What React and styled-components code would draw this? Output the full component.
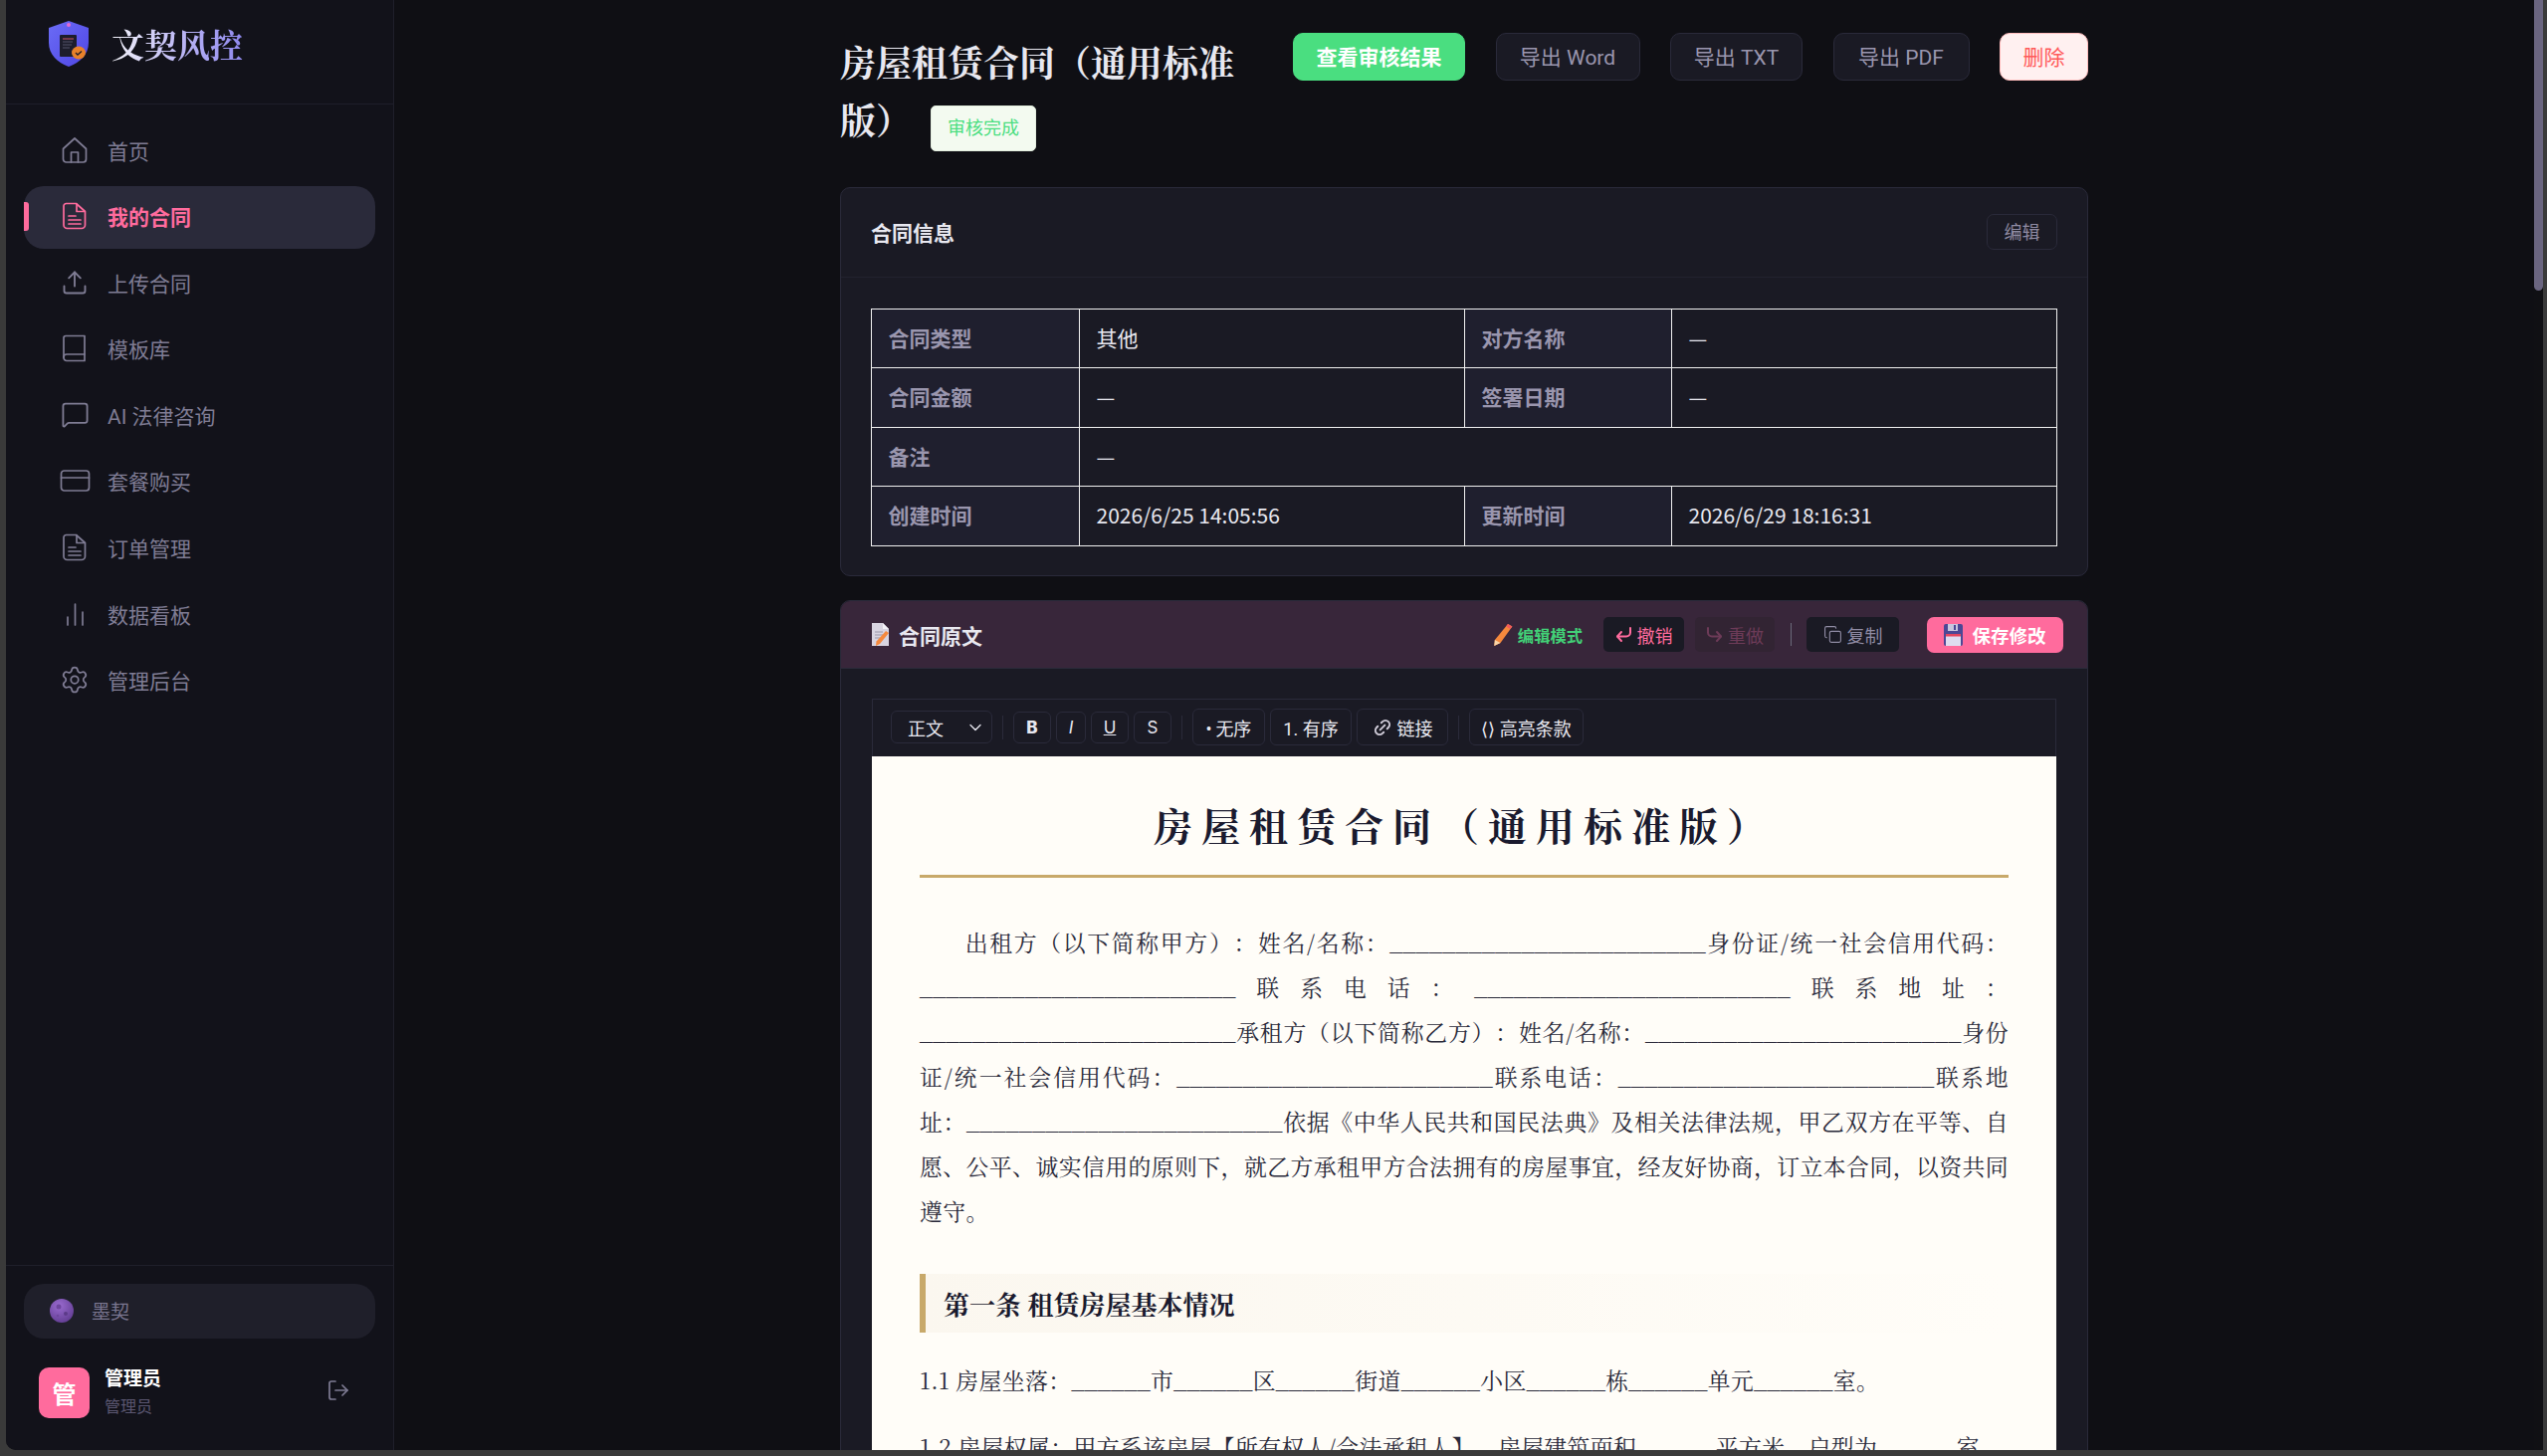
import React from "react";
import styled, { createGlobalStyle } from "styled-components";
import { Settings, Upload, Link2, LogOut, ChevronDown, MessageSquare, Copy } from "lucide-react";

const UI = `Roboto, "Noto Sans CJK SC", sans-serif`;
const SERIF = `"Noto Serif CJK SC", "Liberation Serif", "Noto Sans CJK SC", serif`;

const Global = createGlobalStyle`
  * { box-sizing: border-box; }
  html, body { margin: 0; height: 100%; overflow: hidden; background: #3a3a3a; }
  body { font-family: ${UI}; text-spacing-trim: space-all; }
  #root { height: 100%; }
`;

const Frame = styled.div`
  height: 100vh;
  padding: 0 4px 6px 6px;
  background: #3a3a3a;
`;
const Shell = styled.div`
  display: flex;
  height: 100%;
  background: #0f0f14;
  border-bottom-left-radius: 10px;
  overflow: hidden;
`;
const Sidebar = styled.aside`
  flex: none;
  width: 390px;
  display: flex;
  flex-direction: column;
  background: #12121a;
  border-right: 1px solid #1f1f2a;
`;
const Brand = styled.div`
  flex: none;
  height: 105px;
  display: flex;
  align-items: flex-start;
  gap: 23px;
  padding: 21px 0 0 43px;
  border-bottom: 1px solid #1f1f2a;
`;
const BrandName = styled.div`
  font-family: ${SERIF};
  font-size: 33px;
  line-height: 36px;
  margin-top: 5px;
  font-weight: 700;
  background: linear-gradient(90deg, #f4f4fa 0%, #b9b4f4 55%, #8f88ee 100%);
  -webkit-background-clip: text;
  background-clip: text;
  color: transparent;
`;
const Nav = styled.nav`
  flex: 1;
  display: flex;
  flex-direction: column;
  gap: 3.6px;
  padding: 15px 18px 0;
`;
const NavItem = styled.a`
  position: relative;
  display: flex;
  align-items: center;
  gap: 17px;
  height: 63px;
  padding: 0 0 2px 35px;
  border-radius: 20px;
  font-size: 21px;
  font-weight: ${(p) => (p.$active ? 600 : 400)};
  color: ${(p) => (p.$active ? "#ff6b9d" : "#7f7c94")};
  background: ${(p) => (p.$active ? "#2a2a3a" : "transparent")};
`;
const ActiveMark = styled.span`
  position: absolute;
  left: 0;
  top: 16px;
  width: 5px;
  height: 29px;
  background: #ff6b9d;
  border-radius: 0 3px 3px 0;
`;
const NavIcon = styled.span`
  flex: none;
  width: 32px;
  height: 32px;
  display: flex;
  align-items: center;
  justify-content: center;
`;
const Footer = styled.div`
  flex: none;
  height: 186px;
  padding: 18px 18px 0;
  border-top: 1px solid #1f1f2a;
`;
const ThemeBox = styled.div`
  display: flex;
  align-items: center;
  gap: 18px;
  height: 55px;
  padding: 0 0 2px 26px;
  border-radius: 20px;
  background: #1f1f2a;
  font-size: 19px;
  color: #7a7690;
`;
const UserRow = styled.div`
  display: flex;
  align-items: center;
  margin-top: 28px;
  padding-left: 15px;
`;
const Avatar = styled.div`
  flex: none;
  width: 51px;
  height: 51px;
  display: flex;
  align-items: center;
  justify-content: center;
  border-radius: 10px;
  background: #ff6b9d;
  color: #fff;
  font-size: 24px;
  font-weight: 700;
`;
const UserText = styled.div`
  flex: 1;
  margin-left: 15px;
`;
const UserName = styled.div`
  font-size: 19px;
  line-height: 26px;
  font-weight: 700;
  color: #fff;
`;
const UserRole = styled.div`
  font-size: 16px;
  line-height: 24px;
  margin-top: 3px;
  color: #5a5670;
`;
const LogoutBtn = styled.span`
  display: flex;
  margin-right: 25px;
  margin-top: -6px;
  color: #7f7c94;
`;

const Main = styled.main`
  flex: 1;
  min-width: 0;
  overflow: hidden;
`;
const Content = styled.div`
  width: 1254px;
  margin: 0 auto;
  padding-top: 33px;
`;
const TopRow = styled.div`
  display: flex;
  align-items: flex-start;
  gap: 30px;
`;
const PageTitle = styled.h1`
  flex: 1;
  min-width: 0;
  margin: 0;
  font-family: ${SERIF};
  font-size: 36px;
  line-height: 58px;
  font-weight: 700;
  color: #e8e8f0;
`;
const StatusTag = styled.span`
  display: inline-block;
  margin: -12px 0 -12px 19px;
  padding: 0 16px;
  height: 46px;
  line-height: 44px;
  font-family: ${UI};
  font-size: 18px;
  font-weight: 400;
  color: #4ade80;
  background: #f3faf0;
  border: 1px solid #e4efe0;
  border-radius: 5px;
`;
const Actions = styled.div`
  flex: none;
  display: flex;
  gap: 30.5px;
`;
const ActionBtn = styled.button`
  width: ${(p) => p.$w}px;
  height: 48px;
  padding: 0 0 2px;
  font-family: ${UI};
  font-size: 21px;
  border-radius: 10px;
  ${(p) =>
    p.$kind === "primary"
      ? "background:#4ade80;border:1px solid #4ade80;color:#fff;font-weight:700;"
      : p.$kind === "danger"
      ? "background:#fff0f0;border:1px solid #ffbcbc;color:#ff5a5a;"
      : "background:#1a1a24;border:1px solid #2a2a3a;color:#9a96ae;"}
`;
const Card = styled.section`
  margin-top: ${(p) => p.$top}px;
  background: #1a1a24;
  border: 1px solid #2a2a3a;
  border-radius: 10px;
  overflow: hidden;
`;
const CardHead = styled.div`
  height: 90px;
  display: flex;
  align-items: center;
  justify-content: space-between;
  padding: 0 30px 2px;
  border-bottom: 1px solid #22222e;
`;
const CardTitle = styled.div`
  font-size: 21px;
  font-weight: 700;
  color: #e8e8f0;
`;
const EditBtn = styled.button`
  width: 71px;
  height: 36px;
  padding: 0 0 2px;
  font-family: ${UI};
  font-size: 18px;
  color: #8f8ba3;
  background: transparent;
  border: 1px solid #2a2a3a;
  border-radius: 7px;
`;
const CardBody = styled.div`
  padding: 31px 30px 29px;
`;
const InfoTable = styled.table`
  width: 1192px;
  border-collapse: collapse;
  table-layout: fixed;
  font-family: "Noto Sans CJK SC", sans-serif;
  font-size: 21px;
  & tr:nth-child(odd) { height: 59px; }
  & tr:nth-child(even) { height: 60px; }
  & th, & td {
    border: 1.5px solid #f0f0f0;
    padding: 0 16.5px 3px;
    text-align: left;
  }
  & th { background: #1f1f2e; color: #9a96ae; font-weight: 700; }
  & td { color: #e8e8f0; font-weight: 400; }
`;
const DocHead = styled.div`
  height: 68px;
  display: flex;
  align-items: center;
  padding: 0 24px 0 30px;
  background: #38263a;
  border-bottom: 1px solid #2a2a3a;
`;
const DocTitle = styled.div`
  flex: 1;
  display: flex;
  align-items: center;
  gap: 9px;
  font-size: 21px;
  font-weight: 700;
  color: #e8e8f0;
`;
const ModeLabel = styled.span`
  display: flex;
  align-items: center;
  gap: 5px;
  margin-right: 21px;
  font-size: 16.3px;
  font-weight: 700;
  color: #42d077;
`;
const HistoryBtn = styled.button`
  display: flex;
  align-items: center;
  justify-content: center;
  gap: 5px;
  width: ${(p) => p.$w}px;
  height: 35px;
  padding: 0;
  margin-right: ${(p) => p.$mr}px;
  font-family: ${UI};
  font-size: 18px;
  border: 0;
  border-radius: 5px;
  color: ${(p) => (p.$off ? "#6d3b58" : p.$muted ? "#8f8ba3" : "#ff6b9d")};
  background: ${(p) => (p.$off ? "#322433" : "#1a1a24")};
`;
const HeadSep = styled.span`
  width: 1px;
  height: 23px;
  margin-right: 15px;
  background: #6a6a7a;
`;
const SaveBtn = styled.button`
  display: flex;
  align-items: center;
  justify-content: center;
  gap: 9px;
  width: 137px;
  height: 36px;
  padding: 0;
  font-family: ${UI};
  font-size: 18.5px;
  font-weight: 700;
  color: #fff;
  background: #ff6b9d;
  border: 0;
  border-radius: 7px;
`;
const DocBody = styled.div`
  padding: 30px 31px 0;
`;
const Toolbar = styled.div`
  height: 58px;
  display: flex;
  align-items: center;
  gap: 5px;
  padding: 0 0 2px 18px;
  border: 1px solid #2a2a3a;
  border-bottom: 0;
  background: #1a1a24;
`;
const StyleSelect = styled.div`
  width: 102px;
  height: 33px;
  display: flex;
  align-items: center;
  justify-content: space-between;
  padding: 0 6px 0 16px;
  font-size: 18px;
  color: #e8e8f0;
  background: #1a1a24;
  border: 1px solid #2a2a3a;
  border-radius: 6px;
`;
const ToolSep = styled.span`
  width: 1px;
  height: 24px;
  margin: 0 5px;
  background: #2a2a3a;
`;
const FmtBtn = styled.button`
  width: ${(p) => p.$w || 38}px;
  height: 32px;
  padding: 0;
  font-family: "Inter", ${UI};
  font-size: 17px;
  font-weight: ${(p) => (p.$b ? 800 : 400)};
  font-style: ${(p) => (p.$i ? "italic" : "normal")};
  text-decoration: ${(p) => (p.$u ? "underline" : "none")};
  color: #e8e8f0;
  background: #1a1a24;
  border: 1px solid #2a2a3a;
  border-radius: 6px;
`;
const TextBtn = styled.button`
  display: flex;
  align-items: center;
  justify-content: center;
  gap: 5px;
  width: ${(p) => p.$w}px;
  height: 37px;
  padding: 0;
  font-family: ${UI};
  font-size: 18px;
  color: #e8e8f0;
  background: #1a1a24;
  border: 1px solid #2a2a3a;
  border-radius: 6px;
`;
const SlantedLink = styled(Link2)`
  transform: rotate(-45deg);
  color: #cfcbd8;
`;
const Paper = styled.article`
  padding: 40px 48px 0;
  background: #fffdf8;
  font-family: ${SERIF};
  color: #2a2a3a;
`;
const PaperTitle = styled.h2`
  margin: 0 0 42px;
  padding-bottom: 23px;
  border-bottom: 3px solid #c8a96a;
  font-size: 39px;
  line-height: 56px;
  letter-spacing: 9px;
  font-weight: 700;
  text-align: center;
  color: #1a1a2e;
`;
const Para = styled.p`
  margin: 0 0 ${(p) => p.$mb ?? 22}px;
  font-size: 22.85px;
  line-height: 45px;
  letter-spacing: 0.38px;
  text-align: justify;
  text-indent: ${(p) => (p.$indent ? "2em" : 0)};
`;
const Section = styled.h3`
  margin: 41px 0 25px;
  height: 59px;
  padding-left: 18px;
  font-size: 26px;
  line-height: 59px;
  font-weight: 700;
  color: #1a1a2e;
  background: linear-gradient(90deg, #fbf7ef, #fffdf8);
  border-left: 6px solid #c8a96a;
`;

const Track = styled.div`
  flex: none;
  width: 9px;
  background: #101014;
`;
const Thumb = styled.div`
  height: 292px;
  background: #6a6580;
  border-radius: 0 0 5px 5px;
`;

const line = { fill: "none", stroke: "currentColor", strokeWidth: 1.7, strokeLinecap: "round", strokeLinejoin: "round" };

const Home = () => (
  <svg width="26" height="28" viewBox="0 0 26 28" {...line}>
    <path d="M1.5 12.5 13 2l11.5 10.5V23a3 3 0 0 1-3 3h-17a3 3 0 0 1-3-3z" />
    <path d="M9.5 26V16h7v10" />
  </svg>
);
const DocIcon = () => (
  <svg width="24" height="28" viewBox="0 0 24 28" {...line}>
    <path d="M3.5 1.5h10l9 8V23a3.5 3.5 0 0 1-3.5 3.5H4.500A3.500 3.500 0 0 1 1 23V4a2.500 2.500 0 0 1 2.500-2.500z" />
    <path d="M14 2v7.500h8M6 14h7M6 18h12M6 22h12" />
  </svg>
);
const BookIcon = () => (
  <svg width="24" height="28" viewBox="0 0 24 28" {...line}>
    <path d="M3 1.500h19v25H4a3 3 0 0 1-3-3V3.500a2 2 0 0 1 2-2z" />
    <path d="M1 23a3 3 0 0 1 3-3h18" />
  </svg>
);
const CardIcon = () => (
  <svg width="31" height="24" viewBox="0 0 31 24" {...line}>
    <rect x="1.500" y="2" width="28" height="20" rx="3" />
    <path d="M1.500 9h28" />
  </svg>
);
const BarsIcon = () => (
  <svg width="19" height="24" viewBox="0 0 19 24" {...line}>
    <path d="M2 23v-8M9.500 23V2M17 23V10" />
  </svg>
);
const UndoGlyph = ({ flip }) => (
  <svg width="17" height="18" viewBox="0 0 17 18" style={flip ? { transform: "scaleX(-1)" } : undefined} fill="none" stroke="currentColor" strokeWidth="2" strokeLinecap="round" strokeLinejoin="round">
    <path d="M15 2v4.500a4 4 0 0 1-4 4H2" />
    <path d="M6 6 2 10.500 6 15" />
  </svg>
);

const navItems = [
  ["首页", <Home />],
  ["我的合同", <DocIcon />, true],
  ["上传合同", <Upload size={28} strokeWidth={1.6} />],
  ["模板库", <BookIcon />],
  ["AI 法律咨询", <MessageSquare size={29} strokeWidth={1.5} />],
  ["套餐购买", <CardIcon />],
  ["订单管理", <DocIcon />],
  ["数据看板", <BarsIcon />],
  ["管理后台", <Settings size={30} strokeWidth={1.4} />],
];

const Logo = () => (
  <svg width="40" height="46" viewBox="0 0 40 46">
    <defs>
      <linearGradient id="sh" x1="0" y1="0" x2="1" y2="1">
        <stop offset="0" stopColor="#6b6cf5" />
        <stop offset="1" stopColor="#4f46e5" />
      </linearGradient>
    </defs>
    <path d="M20 0 40 7v15c0 12-9 20-20 24C9 42 0 34 0 22V7z" fill="url(#sh)" />
    <circle cx="20" cy="4" r="2" fill="#e56bd0" />
    <rect x="11" y="14" width="17" height="22" rx="1" fill="#1d1d2b" />
    <path d="M14 18h11" stroke="#d0566a" strokeWidth="1" />
    <path d="M14 21h10M14 24h9M14 27h7" stroke="#55556a" strokeWidth="1" />
    <ellipse cx="30" cy="32" rx="7" ry="6.500" fill="#e8812a" />
    <path d="M27 32l2 2 4-3.500" stroke="#1d1d2b" strokeWidth="1.300" fill="none" />
  </svg>
);
const Moon = () => (
  <svg width="24" height="24" viewBox="0 0 24 24">
    <defs>
      <radialGradient id="mo" cx="0.4" cy="0.3" r="0.8">
        <stop offset="0" stopColor="#9a6bd0" />
        <stop offset="1" stopColor="#5e3a8e" />
      </radialGradient>
    </defs>
    <circle cx="12" cy="12" r="12" fill="url(#mo)" />
    <circle cx="9" cy="8" r="2.500" fill="#6e469e" />
    <circle cx="16" cy="15" r="2" fill="#5c3a88" />
    <circle cx="8" cy="17" r="1.300" fill="#6e469e" />
  </svg>
);
const PencilEmoji = () => (
  <svg width="20" height="24" viewBox="0 0 16 24" preserveAspectRatio="none">
    <path d="M12 1l3.500 2.500L6 20l-5 3 .5-6z" fill="#f5893d" />
    <path d="M12 1l3.500 2.500-1.500 2.500L10.500 3.500z" fill="#f25a5a" />
    <path d="M1 23l.5-6L6 20z" fill="#f7d4a8" />
  </svg>
);
const DocEmoji = () => (
  <svg width="19" height="23" viewBox="0 0 19 23">
    <path d="M1 0h11l6 6v17H1z" fill="#d8d4e0" />
    <path d="M12 0l6 6h-6z" fill="#f4f2f8" />
    <path d="M4 9h8M4 12h8M4 15h5" stroke="#9a96a8" strokeWidth="1" />
    <path d="M15 8l3 2-9 11-4 2 .5-4.500z" fill="#f5893d" />
  </svg>
);
const Floppy = () => (
  <svg width="19" height="22" viewBox="0 0 19 22">
    <rect width="19" height="22" rx="2" fill="#4c4795" />
    <rect x="4" y="0" width="10" height="7" fill="#c9c6de" />
    <rect x="10" y="1" width="2" height="5" fill="#4c4795" />
    <rect x="2" y="10" width="15" height="12" fill="#dedcf0" />
    <rect x="2" y="10" width="15" height="2.500" fill="#e2455e" />
  </svg>
);

const ULong = "_".repeat(24);
const UShort = "_".repeat(6);
const intro =
  `出租方（以下简称甲方）：姓名/名称：${ULong}身份证/统一社会信用代码：${ULong}联系电话：${ULong}联系地址：${ULong}` +
  `承租方（以下简称乙方）：姓名/名称：${ULong}身份证/统一社会信用代码：${ULong}联系电话：${ULong}联系地址：${ULong}` +
  `依据《中华人民共和国民法典》及相关法律法规，甲乙双方在平等、自愿、公平、诚实信用的原则下，就乙方承租甲方合法拥有的房屋事宜，经友好协商，订立本合同，以资共同遵守。`;

export default function App() {
  return (
    <>
      <Global />
      <Frame>
        <Shell>
          <Sidebar>
            <Brand>
              <Logo />
              <BrandName>文契风控</BrandName>
            </Brand>
            <Nav>
              {navItems.map(([label, icon, active]) => (
                <NavItem key={label} $active={active}>
                  {active && <ActiveMark />}
                  <NavIcon>{icon}</NavIcon>
                  {label}
                </NavItem>
              ))}
            </Nav>
            <Footer>
              <ThemeBox>
                <Moon />
                墨契
              </ThemeBox>
              <UserRow>
                <Avatar>管</Avatar>
                <UserText>
                  <UserName>管理员</UserName>
                  <UserRole>管理员</UserRole>
                </UserText>
                <LogoutBtn>
                  <LogOut size={24} strokeWidth={1.7} />
                </LogoutBtn>
              </UserRow>
            </Footer>
          </Sidebar>
          <Main>
            <Content>
              <TopRow>
                <PageTitle>
                  房屋租赁合同（通用标准版）
                  <StatusTag>审核完成</StatusTag>
                </PageTitle>
                <Actions>
                  <ActionBtn $kind="primary" $w={173}>查看审核结果</ActionBtn>
                  <ActionBtn $w={145}>导出 Word</ActionBtn>
                  <ActionBtn $w={133}>导出 TXT</ActionBtn>
                  <ActionBtn $w={137}>导出 PDF</ActionBtn>
                  <ActionBtn $kind="danger" $w={89}>删除</ActionBtn>
                </Actions>
              </TopRow>
              <Card $top={39}>
                <CardHead>
                  <CardTitle>合同信息</CardTitle>
                  <EditBtn>编辑</EditBtn>
                </CardHead>
                <CardBody>
                  <InfoTable>
                    <colgroup>
                      <col style={{ width: 209 }} />
                      <col style={{ width: 387 }} />
                      <col style={{ width: 208 }} />
                      <col style={{ width: 387 }} />
                    </colgroup>
                    <tbody>
                      <tr>
                        <th>合同类型</th>
                        <td>其他</td>
                        <th>对方名称</th>
                        <td>—</td>
                      </tr>
                      <tr>
                        <th>合同金额</th>
                        <td>—</td>
                        <th>签署日期</th>
                        <td>—</td>
                      </tr>
                      <tr>
                        <th>备注</th>
                        <td colSpan={3}>—</td>
                      </tr>
                      <tr>
                        <th>创建时间</th>
                        <td>2026/6/25 14:05:56</td>
                        <th>更新时间</th>
                        <td>2026/6/29 18:16:31</td>
                      </tr>
                    </tbody>
                  </InfoTable>
                </CardBody>
              </Card>
              <Card $top={24}>
                <DocHead>
                  <DocTitle>
                    <DocEmoji />
                    合同原文
                  </DocTitle>
                  <ModeLabel>
                    <PencilEmoji />
                    编辑模式
                  </ModeLabel>
                  <HistoryBtn $w={81} $mr={11}>
                    <UndoGlyph />
                    撤销
                  </HistoryBtn>
                  <HistoryBtn $w={80} $mr={16} $off>
                    <UndoGlyph flip />
                    重做
                  </HistoryBtn>
                  <HeadSep />
                  <HistoryBtn $w={93} $mr={28} $muted>
                    <Copy size={19} strokeWidth={1.4} />
                    复制
                  </HistoryBtn>
                  <SaveBtn>
                    <Floppy />
                    保存修改
                  </SaveBtn>
                </DocHead>
                <DocBody>
                  <Toolbar>
                    <StyleSelect>
                      正文
                      <ChevronDown size={20} strokeWidth={1.6} />
                    </StyleSelect>
                    <ToolSep />
                    <FmtBtn $b>B</FmtBtn>
                    <FmtBtn $i $w={30}>I</FmtBtn>
                    <FmtBtn $u>U</FmtBtn>
                    <FmtBtn>S</FmtBtn>
                    <ToolSep />
                    <TextBtn $w={73}>•{"\u2009"}无序</TextBtn>
                    <TextBtn $w={82}>1. 有序</TextBtn>
                    <TextBtn $w={92}>
                      <SlantedLink size={20} strokeWidth={2.4} />
                      链接
                    </TextBtn>
                    <ToolSep />
                    <TextBtn $w={115}>⟨⟩ 高亮条款</TextBtn>
                  </Toolbar>
                  <Paper>
                    <PaperTitle>房屋租赁合同（通用标准版）</PaperTitle>
                    <Para $indent $mb={0}>{intro}</Para>
                    <Section>第一条 租赁房屋基本情况</Section>
                    <Para>
                      1.1 房屋坐落：{UShort}市{UShort}区{UShort}街道{UShort}小区{UShort}栋{UShort}单元{UShort}室。
                    </Para>
                    <Para>
                      1.2 房屋权属：甲方系该房屋【所有权人/合法承租人】，房屋建筑面积{UShort}平方米，户型为{UShort}室。
                    </Para>
                  </Paper>
                </DocBody>
              </Card>
            </Content>
          </Main>
          <Track>
            <Thumb />
          </Track>
        </Shell>
      </Frame>
    </>
  );
}
